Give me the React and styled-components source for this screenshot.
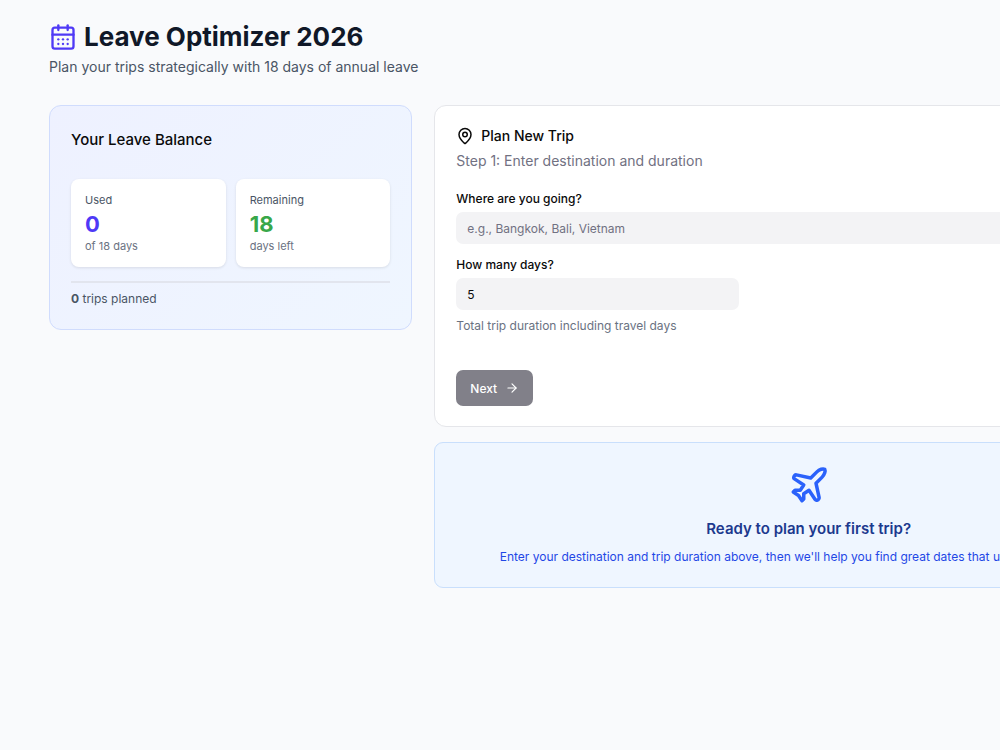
import { useState } from "react";
import styled, { createGlobalStyle } from "styled-components";
import { ArrowRight, CalendarDays, MapPin, Plane } from "lucide-react";

const TOTAL_DAYS = 18;

const GlobalStyle = createGlobalStyle`
  *,
  *::before,
  *::after {
    box-sizing: border-box;
    margin: 0;
  }

  body {
    background: #f9fafc;
    font-family: Inter, "Liberation Sans", sans-serif;
    color: #0a0a0a;
    overflow-x: auto;
  }

  input,
  button {
    font: inherit;
  }
`;

const Page = styled.main`
  min-width: 1232px;
  max-width: 1400px;
  min-height: 100vh;
  margin: 0 auto;
  padding: 20px 49px;
`;

const Header = styled.header`
  margin-bottom: 25px;
`;

const Title = styled.h1`
  display: flex;
  align-items: center;
  gap: 7px;
  font-size: 26px;
  line-height: 34px;
  font-weight: 700;
  color: #101828;

  svg {
    color: #4f39f6;
  }
`;

const Subtitle = styled.p`
  font-size: 14px;
  line-height: 26px;
  color: #4a5565;
`;

const Columns = styled.div`
  display: grid;
  grid-template-columns: repeat(3, minmax(0, 1fr));
  column-gap: 22px;
  align-items: start;
`;

const Main = styled.div`
  grid-column: span 2;
  display: grid;
  row-gap: 15px;
`;

const Card = styled.section`
  padding: 20px 21px;
  border: 1px solid #e5e6ea;
  border-radius: 12px;
  background: #fff;
`;

const BalanceCard = styled(Card)`
  border-color: #d0dcfd;
  background: linear-gradient(135deg, #eef1ff, #eff6ff);
`;

const BalanceTitle = styled.h2`
  margin-bottom: 25px;
  font-size: 15px;
  line-height: 28px;
  font-weight: 500;
`;

const Stats = styled.div`
  display: grid;
  grid-template-columns: 1fr 1fr;
  gap: 10px;
`;

const Stat = styled.div`
  padding: 13px 14px 15px;
  border-radius: 8px;
  background: #fff;
  box-shadow: 0 1px 3px rgba(0, 0, 0, 0.1);
`;

const StatLabel = styled.p`
  font-size: 11px;
  line-height: 16px;
  color: #4a5565;
`;

const StatValue = styled.p`
  font-size: 22px;
  line-height: 32px;
  font-weight: 700;
  color: ${(props) => props.$color};
`;

const StatNote = styled.p`
  font-size: 11px;
  line-height: 12px;
  color: #6a7282;
`;

const Trips = styled.p`
  margin-top: 14px;
  padding-top: 6px;
  border-top: 2px solid #e2e5ee;
  font-size: 12px;
  line-height: 20px;
  color: #4a5565;
`;

const FormTitle = styled.h2`
  display: flex;
  align-items: center;
  gap: 7px;
  font-size: 14px;
  line-height: 20px;
  font-weight: 500;
`;

const Step = styled.p`
  margin: 4px 0 18px;
  font-size: 14px;
  line-height: 22px;
  color: #717182;
`;

const Field = styled.div`
  margin-bottom: 12px;
`;

const Label = styled.label`
  display: block;
  margin-bottom: 4px;
  font-size: 12px;
  line-height: 18px;
  font-weight: 500;
`;

const Input = styled.input`
  display: block;
  width: 100%;
  max-width: ${(props) => (props.$narrow ? "283px" : "none")};
  height: 32px;
  padding: 0 11px;
  border: none;
  border-radius: 7px;
  background: #f3f3f5;
  font-size: 12px;
  color: #0a0a0a;

  &::placeholder {
    color: #717182;
    opacity: 1;
  }

  &[type="number"] {
    appearance: textfield;
  }
`;

const Hint = styled.p`
  margin: 6px 0 34px;
  font-size: 12px;
  line-height: 20px;
  color: #6a7282;
`;

const Button = styled.button`
  display: inline-flex;
  align-items: center;
  gap: 8px;
  height: 36px;
  padding: 0 14px;
  border: none;
  border-radius: 7px;
  background: #030213;
  font-size: 12px;
  font-weight: 500;
  color: #fff;

  &:disabled {
    background: #818089;
  }
`;

const Intro = styled.section`
  padding: 21px 21px 20px;
  border: 1px solid #c9dffc;
  border-radius: 9px;
  background: #eff6ff;
  text-align: center;

  svg {
    display: block;
    margin: 0 auto 10px;
    color: #2b62fb;
  }
`;

const IntroTitle = styled.h3`
  margin-bottom: 5px;
  font-size: 15px;
  line-height: 26px;
  font-weight: 600;
  color: #1c398e;
`;

const IntroText = styled.p`
  font-size: 12px;
  line-height: 20px;
  color: #1f48e6;
`;

function LeaveBalance({ used, trips }) {
  return (
    <BalanceCard>
      <BalanceTitle>Your Leave Balance</BalanceTitle>
      <Stats>
        <Stat>
          <StatLabel>Used</StatLabel>
          <StatValue $color="#4f39f6">{used}</StatValue>
          <StatNote>of {TOTAL_DAYS} days</StatNote>
        </Stat>
        <Stat>
          <StatLabel>Remaining</StatLabel>
          <StatValue $color="#38a749">{TOTAL_DAYS - used}</StatValue>
          <StatNote>days left</StatNote>
        </Stat>
      </Stats>
      <Trips>
        <strong>{trips}</strong> trips planned
      </Trips>
    </BalanceCard>
  );
}

function TripForm() {
  const [destination, setDestination] = useState("");
  const [days, setDays] = useState(5);

  return (
    <Card as="form" onSubmit={(e) => e.preventDefault()}>
      <FormTitle>
        <MapPin size={18} />
        Plan New Trip
      </FormTitle>
      <Step>Step 1: Enter destination and duration</Step>

      <Field>
        <Label htmlFor="destination">Where are you going?</Label>
        <Input
          id="destination"
          placeholder="e.g., Bangkok, Bali, Vietnam"
          value={destination}
          onChange={(e) => setDestination(e.target.value)}
        />
      </Field>

      <Label htmlFor="days">How many days?</Label>
      <Input
        id="days"
        type="number"
        min="1"
        $narrow
        value={days}
        onChange={(e) => setDays(e.target.value)}
      />
      <Hint>Total trip duration including travel days</Hint>

      <Button type="submit" disabled={!destination || !days}>
        Next
        <ArrowRight size={14} />
      </Button>
    </Card>
  );
}

function App() {
  return (
    <>
      <GlobalStyle />
      <Page>
        <Header>
          <Title>
            <CalendarDays size={28} />
            Leave Optimizer 2026
          </Title>
          <Subtitle>
            Plan your trips strategically with {TOTAL_DAYS} days of annual leave
          </Subtitle>
        </Header>

        <Columns>
          <LeaveBalance used={0} trips={0} />
          <Main>
            <TripForm />
            <Intro>
              <Plane size={42} />
              <IntroTitle>Ready to plan your first trip?</IntroTitle>
              <IntroText>
                Enter your destination and trip duration above, then we'll help
                you find great dates that use your leave wisely.
              </IntroText>
            </Intro>
          </Main>
        </Columns>
      </Page>
    </>
  );
}

export default App;
